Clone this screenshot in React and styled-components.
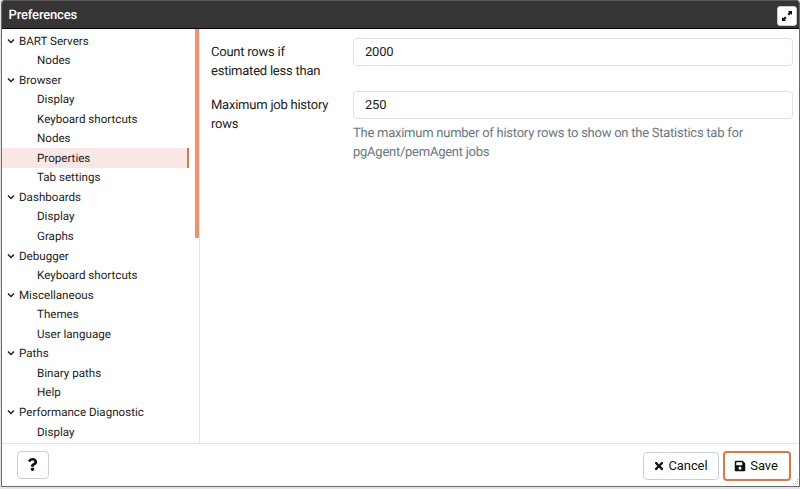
import React from "react";
import styled, { createGlobalStyle, css } from "styled-components";
import { FaSave, FaTimes, FaQuestion } from "react-icons/fa";

const GlobalStyle = createGlobalStyle`
  *, *::before, *::after { box-sizing: border-box; }
  body {
    margin: 0;
    background: #e4e3e6;
    font-family: Roboto, "Liberation Sans", sans-serif;
    color: #222;
    overflow: hidden;
    text-rendering: geometricPrecision;
  }
`;

const Dialog = styled.div`
  position: relative;
  display: flex;
  flex-direction: column;
  width: 799px;
  height: 487px;
  margin-left: 1px;
  background: #fff;
  border: 1px solid #6b6b6e;
  border-top: 0;
  border-radius: 4px 4px 0 0;
  overflow: hidden;
`;

const TitleBar = styled.header`
  display: flex;
  align-items: center;
  justify-content: space-between;
  flex: none;
  height: 29px;
  margin: 0 -1px;
  padding: 0 3px 0 7.5px;
  background: #363435;
  border-top: 1px solid #5a595a;
  border-bottom: 1px solid #000;
  color: #fff;
`;

const Title = styled.h1`
  margin: 0;
  padding-top: 2px;
  font-size: 13px;
  font-weight: 500;
  line-height: 20px;
  letter-spacing: -0.15px;
`;

const MaximizeButton = styled.button`
  display: flex;
  align-items: center;
  justify-content: center;
  width: 20px;
  height: 20px;
  margin-top: 3px;
  padding: 0;
  background: #fff;
  border: 1px solid #c9cad6;
  border-radius: 3px;
  color: #111;
`;

const Body = styled.main`
  display: flex;
  flex: none;
  height: 415px;
  border-bottom: 1px solid #e2e4e8;
`;

const Sidebar = styled.nav`
  display: flex;
  flex: none;
  width: 198px;
  border-right: 1px solid #e2e4e8;
`;

const Tree = styled.ul`
  flex: 1;
  margin: 0;
  padding: 1.8px 0 0;
  list-style: none;
  overflow: hidden;
`;

const TreeRow = styled.li`
  display: flex;
  align-items: center;
  height: 19.56px;
  width: 187px;
  padding-left: ${(p) => (p.$child ? 35 : 5)}px;
  font-size: 11.6px;
  white-space: nowrap;
  ${(p) =>
    p.$selected &&
    css`
      background: #f8e7e4;
      border-right: 2px solid #dd7644;
    `}
`;

const Chevron = styled.svg`
  width: 8px;
  height: 8px;
  margin-right: 4px;
  fill: none;
  stroke: #222;
  stroke-width: 1.5;
`;

const ScrollThumb = styled.div`
  width: 4px;
  height: 209px;
  background: #e9946e;
`;

const Form = styled.section`
  flex: 1;
  padding: 9px 6px 0 11px;
`;

const Field = styled.div`
  display: grid;
  grid-template-columns: 142px 1fr;
  min-height: 53px;
`;

const Label = styled.label`
  width: 130px;
  padding-top: 5px;
  font-size: 13px;
  line-height: 19px;
  letter-spacing: -0.23px;
`;

const Input = styled.input`
  display: block;
  width: 100%;
  height: 28px;
  padding: 0 11px 1px;
  border: 1px solid #dee0e5;
  border-radius: 4px;
  background: #fff;
  color: #222;
  font: 13px Roboto, sans-serif;
  letter-spacing: -0.2px;
  outline: none;
`;

const Hint = styled.p`
  width: 410px;
  margin: 5px 0 0;
  color: #697684;
  font-size: 13px;
  line-height: 19px;
  letter-spacing: -0.25px;
`;

const Footer = styled.footer`
  display: flex;
  align-items: center;
  flex: 1;
  padding: 0 8px 0 15px;
`;

const Button = styled.button`
  display: flex;
  align-items: center;
  justify-content: center;
  gap: 4px;
  width: ${(p) => p.$width}px;
  height: ${(p) => (p.$primary ? 30 : 28)}px;
  padding: 0 2px 1px 0;
  background: #fff;
  border: ${(p) => (p.$primary ? "2px solid #de7745" : "1px solid #c9d0dc")};
  border-radius: 4px;
  color: #111;
  font: 400 13px Roboto, sans-serif;
  letter-spacing: -0.1px;
`;

const Actions = styled.div`
  display: flex;
  align-items: center;
  gap: 4px;
  margin-left: auto;
  padding-top: 2px;
`;

const ResizeGrip = styled.svg`
  position: absolute;
  right: 0;
  bottom: 0;
  width: 7px;
  height: 7px;
  fill: #b5b5b8;
`;

const tree = [
  ["BART Servers", ["Nodes"]],
  ["Browser", ["Display", "Keyboard shortcuts", "Nodes", "Properties", "Tab settings"]],
  ["Dashboards", ["Display", "Graphs"]],
  ["Debugger", ["Keyboard shortcuts"]],
  ["Miscellaneous", ["Themes", "User language"]],
  ["Paths", ["Binary paths", "Help"]],
  ["Performance Diagnostic", ["Display"]],
];

export default function App() {
  return (
    <>
      <GlobalStyle />
      <Dialog>
        <TitleBar>
          <Title>Preferences</Title>
          <MaximizeButton aria-label="Maximize">
            <svg width="12" height="12" viewBox="0 0 12 12" fill="currentColor">
              <path d="M7 1h4v4L9.8 3.8 8 5.6 6.4 4 8.2 2.2z" />
              <path d="M5 11H1V7l1.2 1.2L4 6.4 5.6 8 3.8 9.8z" />
            </svg>
          </MaximizeButton>
        </TitleBar>
        <Body>
          <Sidebar>
            <Tree>
              {tree.map(([group, children]) => (
                <React.Fragment key={group}>
                  <TreeRow>
                    <Chevron viewBox="0 0 8 8">
                      <path d="M1 2.5 4 5.5 7 2.5" />
                    </Chevron>
                    {group}
                  </TreeRow>
                  {children.map((name) => (
                    <TreeRow key={name} $child $selected={name === "Properties"}>
                      {name}
                    </TreeRow>
                  ))}
                </React.Fragment>
              ))}
            </Tree>
            <ScrollThumb />
          </Sidebar>
          <Form>
            <Field>
              <Label htmlFor="count">Count rows if estimated less than</Label>
              <Input id="count" defaultValue="2000" />
            </Field>
            <Field>
              <Label htmlFor="history">Maximum job history rows</Label>
              <div>
                <Input id="history" defaultValue="250" />
                <Hint>
                  The maximum number of history rows to show on the Statistics tab for
                  pgAgent/pemAgent jobs
                </Hint>
              </div>
            </Field>
          </Form>
        </Body>
        <Footer>
          <Button $width={32} aria-label="Help">
            <FaQuestion size={13} />
          </Button>
          <Actions>
            <Button $width={76}>
              <FaTimes size={12} />
              Cancel
            </Button>
            <Button $width={68} $primary>
              <FaSave size={12} />
              Save
            </Button>
          </Actions>
        </Footer>
        <ResizeGrip viewBox="0 0 7 7">
          <path d="M5 0h1v1H5zM3 2h1v1H3zM5 2h1v1H5zM1 4h1v1H1zM3 4h1v1H3zM5 4h1v1H5z" />
        </ResizeGrip>
      </Dialog>
    </>
  );
}
